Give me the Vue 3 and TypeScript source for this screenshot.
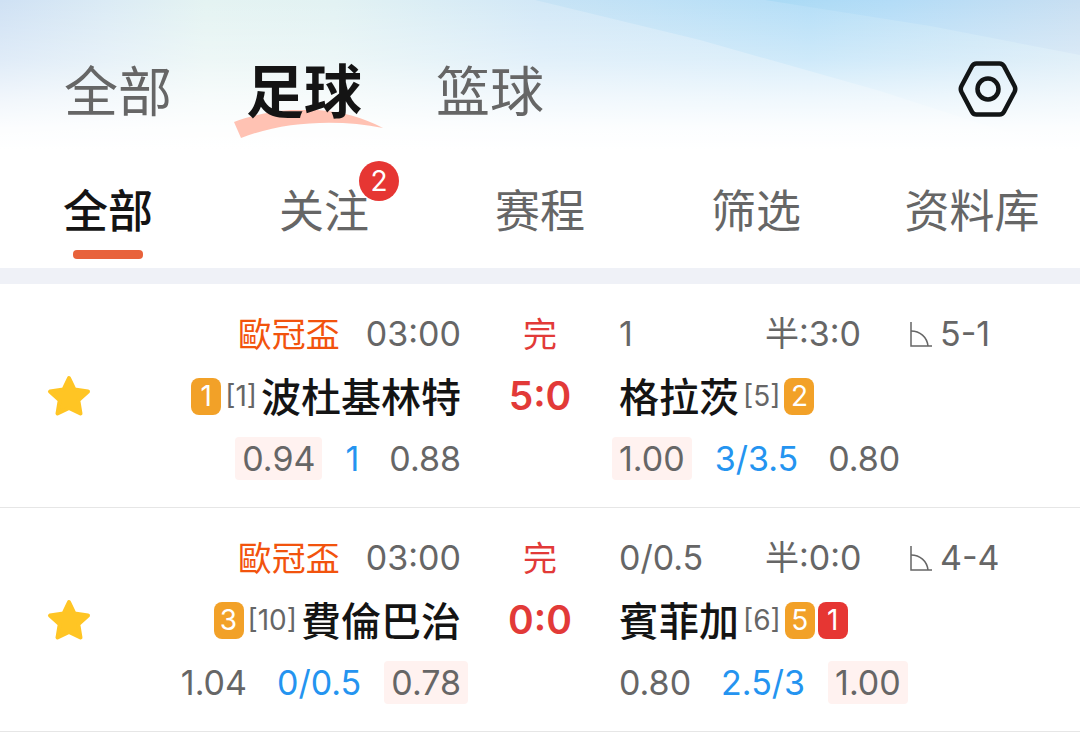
<script setup lang="ts">
import { ref } from 'vue'

interface Odd {
  text: string
  kind?: 'handicap' | 'hit'
}

interface Card {
  color: 'yellow' | 'red'
  count: number
}

interface Side {
  name: string
  rank: number
  cards: Card[]
  odds: Odd[]
}

interface Match {
  id: number
  league: string
  time: string
  status: string
  score: string
  handicap: string
  half: string
  corners: string
  starred: boolean
  home: Side
  away: Side
}

const sports = ['全部', '足球', '篮球']
const activeSport = ref('足球')

const sections = [
  { label: '全部', count: 0 },
  { label: '关注', count: 2 },
  { label: '赛程', count: 0 },
  { label: '筛选', count: 0 },
  { label: '资料库', count: 0 },
]
const activeSection = ref('全部')

const matches = ref<Match[]>([
  {
    id: 1,
    league: '歐冠盃',
    time: '03:00',
    status: '完',
    score: '5:0',
    handicap: '1',
    half: '3:0',
    corners: '5-1',
    starred: true,
    home: {
      name: '波杜基林特',
      rank: 1,
      cards: [{ color: 'yellow', count: 1 }],
      odds: [{ text: '0.94', kind: 'hit' }, { text: '1', kind: 'handicap' }, { text: '0.88' }],
    },
    away: {
      name: '格拉茨',
      rank: 5,
      cards: [{ color: 'yellow', count: 2 }],
      odds: [{ text: '1.00', kind: 'hit' }, { text: '3/3.5', kind: 'handicap' }, { text: '0.80' }],
    },
  },
  {
    id: 2,
    league: '歐冠盃',
    time: '03:00',
    status: '完',
    score: '0:0',
    handicap: '0/0.5',
    half: '0:0',
    corners: '4-4',
    starred: true,
    home: {
      name: '費倫巴治',
      rank: 10,
      cards: [{ color: 'yellow', count: 3 }],
      odds: [{ text: '1.04' }, { text: '0/0.5', kind: 'handicap' }, { text: '0.78', kind: 'hit' }],
    },
    away: {
      name: '賓菲加',
      rank: 6,
      cards: [{ color: 'yellow', count: 5 }, { color: 'red', count: 1 }],
      odds: [{ text: '0.80' }, { text: '2.5/3', kind: 'handicap' }, { text: '1.00', kind: 'hit' }],
    },
  },
])
</script>

<template>
  <div class="page">
    <header class="top">
      <svg class="sky" viewBox="0 0 1080 150" preserveAspectRatio="none" aria-hidden="true">
        <defs>
          <linearGradient id="base" x1="0" x2="1" y1="0" y2="0">
            <stop offset="0" stop-color="#cfe1f4" />
            <stop offset="0.1" stop-color="#dbebf5" />
            <stop offset="0.19" stop-color="#e4f3f2" />
            <stop offset="0.31" stop-color="#e2f2f3" />
            <stop offset="0.5" stop-color="#d2e8f7" />
            <stop offset="0.75" stop-color="#c9e6f8" />
            <stop offset="1" stop-color="#d6e9f5" />
          </linearGradient>
          <linearGradient id="beam" gradientUnits="userSpaceOnUse" x1="540" x2="1080" y1="0" y2="0">
            <stop offset="0" stop-color="#c4e2f5" />
            <stop offset="0.5" stop-color="#afdcf7" />
            <stop offset="1" stop-color="#d0e7f5" />
          </linearGradient>
          <linearGradient id="ray" gradientUnits="userSpaceOnUse" x1="765" x2="1080" y1="0" y2="0">
            <stop offset="0" stop-color="#a9daf5" />
            <stop offset="0.4" stop-color="#b3dcf7" />
            <stop offset="1" stop-color="#c8dff2" />
          </linearGradient>
          <linearGradient id="fade" x1="0" x2="0" y1="0" y2="1">
            <stop offset="0" stop-color="#fff" stop-opacity="0" />
            <stop offset="0.4" stop-color="#fff" stop-opacity="0.35" />
            <stop offset="0.65" stop-color="#fff" stop-opacity="0.7" />
            <stop offset="0.85" stop-color="#fff" stop-opacity="0.93" />
            <stop offset="1" stop-color="#fff" />
          </linearGradient>
        </defs>
        <rect width="1080" height="150" fill="url(#base)" />
        <path d="M535 0 L700 40 L880 91 L1000 130 L1080 150 V0Z" fill="url(#beam)" opacity="0.8" />
        <path d="M765 0 L930 26 L1080 55 V0Z" fill="url(#ray)" />
        <rect width="1080" height="150" fill="url(#fade)" />
      </svg>
      <nav class="sports" aria-label="运动">
        <button
          v-for="sport in sports"
          :key="sport"
          type="button"
          class="sport"
          :class="{ active: sport === activeSport }"
          @click="activeSport = sport"
        >
          <svg v-if="sport === activeSport" class="swoosh" viewBox="0 0 150 28" aria-hidden="true">
            <path d="M0 12 C45 -5 105 -6 149 18 C105 9 50 11 7 28Z" fill="#ffc2b3" />
          </svg>
          <span class="sport-text">{{ sport }}</span>
        </button>
      </nav>
      <button type="button" class="settings" aria-label="设置">
        <svg viewBox="0 0 60 58" fill="none" stroke="#121516" aria-hidden="true">
          <path
            d="M18.500 3.500H41.500Q44.500 3.500 46 6.200L56.500 26Q58 29 56.500 32L46 51.800Q44.500 54.500 41.500 54.500H18.500Q15.500 54.500 14 51.800L3.500 32Q2 29 3.500 26L14 6.200Q15.500 3.500 18.500 3.500Z"
            stroke-width="4.500"
          />
          <circle cx="30" cy="29" r="10.500" stroke-width="4.500" />
        </svg>
      </button>
    </header>

    <nav class="sections" aria-label="分类">
      <button
        v-for="item in sections"
        :key="item.label"
        type="button"
        class="section"
        :class="{ active: item.label === activeSection }"
        @click="activeSection = item.label"
      >
        <span class="section-text">
          {{ item.label }}<span v-if="item.count" class="count">{{ item.count }}</span>
        </span>
      </button>
    </nav>

    <main class="list">
      <article v-for="m in matches" :key="m.id" class="match">
        <button
          type="button"
          class="star"
          :aria-pressed="m.starred"
          aria-label="关注比赛"
          @click="m.starred = !m.starred"
        >
          <svg viewBox="0 0 44 42" aria-hidden="true">
            <path
              d="M22 3 L27.500 14.500 L41 16.500 L31.300 25.400 L33.500 38.500 L22 33 L10.500 38.500 L12.700 25.400 L3 16.500 L16.500 14.500Z"
              :fill="m.starred ? '#ffc524' : '#d5d5d5'"
              :stroke="m.starred ? '#ffc524' : '#d5d5d5'"
              stroke-width="4"
              stroke-linejoin="round"
            />
          </svg>
        </button>

        <div class="side home">
          <div class="line">
            <span class="league">{{ m.league }}</span>
            <time class="time">{{ m.time }}</time>
          </div>
          <div class="line team">
            <span v-for="c in m.home.cards" :key="c.color" class="card" :class="c.color">{{ c.count }}</span>
            <span class="rank">[{{ m.home.rank }}]</span>
            <strong class="name">{{ m.home.name }}</strong>
          </div>
          <div class="line odds">
            <span v-for="(o, i) in m.home.odds" :key="i" class="odd" :class="o.kind">{{ o.text }}</span>
          </div>
        </div>

        <div class="middle">
          <div class="line status">{{ m.status }}</div>
          <div class="line score">{{ m.score }}</div>
        </div>

        <div class="side away">
          <div class="line info">
            <span>{{ m.handicap }}</span>
            <span>半:{{ m.half }}</span>
            <span class="corners">
              <svg viewBox="0 0 22 26" fill="none" stroke="#666" aria-hidden="true">
                <path d="M1 1V25H22" stroke-width="1.500" />
                <path d="M1 10C10 10 17 16 18 25" stroke-width="1.500" />
              </svg>
              {{ m.corners }}
            </span>
          </div>
          <div class="line team">
            <strong class="name">{{ m.away.name }}</strong>
            <span class="rank">[{{ m.away.rank }}]</span>
            <span v-for="c in m.away.cards" :key="c.color" class="card" :class="c.color">{{ c.count }}</span>
          </div>
          <div class="line odds">
            <span v-for="(o, i) in m.away.odds" :key="i" class="odd" :class="o.kind">{{ o.text }}</span>
          </div>
        </div>
      </article>
    </main>
  </div>
</template>

<style>
body {
  margin: 0;
  background: #fff;
}
</style>

<style scoped>
.page {
  font-family: Inter, 'Noto Sans CJK SC', sans-serif;
  color: #666;
  background: #fff;
}

button {
  margin: 0;
  padding: 0;
  border: 0;
  background: none;
  font: inherit;
  color: inherit;
  cursor: pointer;
}

.top {
  position: relative;
  display: flex;
  align-items: center;
  justify-content: space-between;
  height: 150px;
  padding: 28px 62px 0 64px;
  box-sizing: border-box;
}

.sky {
  position: absolute;
  inset: 0;
  width: 100%;
  height: 100%;
}

.sports {
  position: relative;
  display: flex;
  align-items: center;
  gap: 74px;
}

.sport {
  position: relative;
  padding-top: 8px;
  font-size: 54px;
  line-height: 80px;
}

.sport.active {
  padding-top: 6px;
  font-size: 58px;
  font-weight: 700;
  color: #141414;
}

.sport-text {
  position: relative;
}

.swoosh {
  position: absolute;
  left: -12px;
  bottom: -6px;
  width: 150px;
  height: 28px;
}

.settings {
  position: relative;
  width: 60px;
  height: 58px;
}

.settings svg {
  display: block;
  width: 100%;
  height: 100%;
}

.sections {
  display: grid;
  grid-template-columns: repeat(5, 1fr);
  border-bottom: 16px solid #eff1f7;
}

.section {
  display: flex;
  flex-direction: column;
  align-items: center;
  height: 118px;
  padding-top: 32px;
  box-sizing: border-box;
  font-size: 45px;
  line-height: 60px;
}

.section-text {
  position: relative;
}

.section.active {
  font-weight: 500;
  color: #141414;
}

.section.active::after {
  content: '';
  width: 70px;
  height: 9px;
  margin-top: 8px;
  border-radius: 4px;
  background: #e8623b;
}

.count {
  position: absolute;
  top: -21px;
  right: -30px;
  width: 40px;
  height: 40px;
  border-radius: 50%;
  background: #e63633;
  color: #fff;
  font-size: 28px;
  line-height: 40px;
  text-align: center;
}

.match {
  display: grid;
  grid-template-columns: 138px 1fr 158px calc(50% - 79px);
  align-items: start;
  padding: 19px 0 18px;
  border-bottom: 1px solid #e6e6e6;
  font-size: 34px;
}

.star {
  align-self: center;
  justify-self: center;
  width: 44px;
  height: 42px;
}

.star svg {
  display: block;
  width: 100%;
  height: 100%;
}

.line {
  display: flex;
  align-items: center;
  height: 62px;
  line-height: 62px;
  white-space: nowrap;
}

.home .line {
  justify-content: flex-end;
}

.league,
.status {
  padding-top: 2px;
  box-sizing: border-box;
}

.league {
  color: #f2530d;
}

.time {
  margin-left: 26px;
}

.name {
  padding-top: 3px;
  font-size: 40px;
  font-weight: 500;
  color: #141414;
}

.rank {
  margin: 0 4px;
  font-size: 28px;
}

.card {
  min-width: 30px;
  padding: 0 6px;
  box-sizing: border-box;
  border-radius: 8px;
  color: #fff;
  font-size: 28px;
  line-height: 37px;
  text-align: center;
}

.card + .card {
  margin-left: 3px;
}

.yellow {
  background: #f2a128;
}

.red {
  background: #e63633;
}

.middle .line {
  justify-content: center;
  color: #e23a38;
}

.middle .score {
  font-size: 39px;
  font-weight: 600;
}

.odds {
  gap: 16px;
  margin: 0 -7px;
}

.odd {
  padding: 0 7px;
  border-radius: 4px;
  line-height: 43px;
}

.odd.handicap {
  color: #2494f0;
}

.odd.hit {
  background: #fff2f0;
}

.info {
  display: grid;
  grid-template-columns: 146px 145px 1fr;
}

.corners {
  display: flex;
  align-items: center;
  gap: 8px;
}

.corners svg {
  width: 22px;
  height: 26px;
}
</style>
